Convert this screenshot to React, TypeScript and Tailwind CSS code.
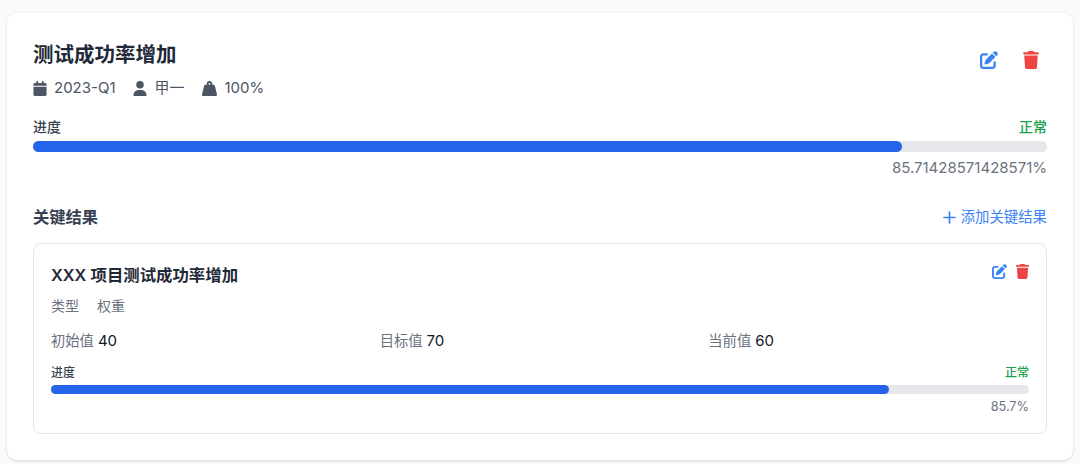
import React from 'react';
import { FaCalendar, FaPenToSquare, FaTrash, FaUser, FaWeightHanging } from 'react-icons/fa6';

const font = "font-['Inter','Noto_Sans_CJK_SC',sans-serif]";

const App: React.FC = () => {
  return (
    <div className={`${font} h-[464px] overflow-hidden bg-[#f9fafb] px-[7px] pt-[13px]`}>
      <div className="h-[447px] rounded-[10px] bg-white px-[26px] pt-[26px] shadow-[0_1px_3px_rgba(0,0,0,0.14)]">
        {/* objective header */}
        <div className="flex items-start justify-between">
          <div>
            <h1 className="pt-[1px] text-[20.5px] leading-[29px] font-bold text-[#1f2937]">测试成功率增加</h1>
            <div className="mt-[9px] flex h-[20px] items-center text-[15px] text-[#4b5563]">
              <FaCalendar className="h-[15px] w-[14px] text-[#4b5563]" />
              <span className="ml-[7px]">2023-Q1</span>
              <FaUser className="ml-[17px] h-[15px] w-[14px] text-[#4b5563]" />
              <span className="ml-[8px]">甲一</span>
              <FaWeightHanging className="ml-[17px] h-[15px] w-[15px] text-[#4b5563]" />
              <span className="ml-[8px]">100%</span>
            </div>
          </div>
          <div className="mt-[12px] mr-[8px] flex items-center gap-[25px]">
            <FaPenToSquare className="h-[18px] w-[18px] text-[#3b82f6]" />
            <FaTrash className="h-[18px] w-[16px] text-[#ef4444]" />
          </div>
        </div>

        {/* objective progress */}
        <div className="mt-[19px]">
          <div className="flex justify-between text-[14px] leading-[20px] font-medium">
            <span className="text-[#374151]">进度</span>
            <span className="text-[#16a34a]">正常</span>
          </div>
          <div className="mt-[4px] h-[11px] rounded-full bg-[#e5e7eb]">
            <div className="h-full w-[85.71%] rounded-full bg-[#2563eb]" />
          </div>
          <div className="mt-[6px] text-right text-[15px] leading-[20px] text-[#6b7280]">85.71428571428571%</div>
        </div>

        {/* key results */}
        <div className="mt-[27px] flex items-center justify-between">
          <h2 className="text-[16.3px] leading-[24px] font-semibold text-[#374151]">关键结果</h2>
          <button className="flex items-center gap-[5px] text-[14.4px] leading-[20px] text-[#3b82f6]">
            <svg viewBox="0 0 13 13" className="h-[13px] w-[13px]" fill="none" stroke="currentColor" strokeWidth="1.7" strokeLinecap="round">
              <path d="M6.5 1v11M1 6.5h11" />
            </svg>
            添加关键结果
          </button>
        </div>

        <div className="mt-[14px] h-[191px] rounded-[8px] border border-[#e5e7eb] px-[17px] pt-[17px]">
          <div className="flex items-start justify-between">
            <h3 className="text-[16.4px] leading-[28px] font-semibold text-[#1f2937]">XXX 项目测试成功率增加</h3>
            <div className="mt-[3px] flex items-center gap-[9px]">
              <FaPenToSquare className="h-[15px] w-[15px] text-[#3b82f6]" />
              <FaTrash className="h-[15px] w-[13px] text-[#ef4444]" />
            </div>
          </div>
          <div className="mt-[7px] flex gap-[18px] text-[14px] leading-[20px] text-[#6b7280]">
            <span>类型</span>
            <span>权重</span>
          </div>
          <div className="mt-[15px] grid grid-cols-3 gap-2 text-[14.3px] leading-[20px] text-[#6b7280]">
            <div>初始值 <span className="text-[15px] text-[#111827]">40</span></div>
            <div>目标值 <span className="text-[15px] text-[#111827]">70</span></div>
            <div>当前值 <span className="text-[15px] text-[#111827]">60</span></div>
          </div>
          <div className="mt-[14px]">
            <div className="flex justify-between text-[12px] leading-[16px] font-medium">
              <span className="text-[#374151]">进度</span>
              <span className="text-[#16a34a]">正常</span>
            </div>
            <div className="mt-[4px] h-[9px] rounded-full bg-[#e5e7eb]">
              <div className="h-full w-[85.7%] rounded-full bg-[#2563eb]" />
            </div>
            <div className="mt-[5px] text-right text-[12.7px] leading-[16px] text-[#6b7280]">85.7%</div>
          </div>
        </div>
      </div>
    </div>
  );
};

export default App;
